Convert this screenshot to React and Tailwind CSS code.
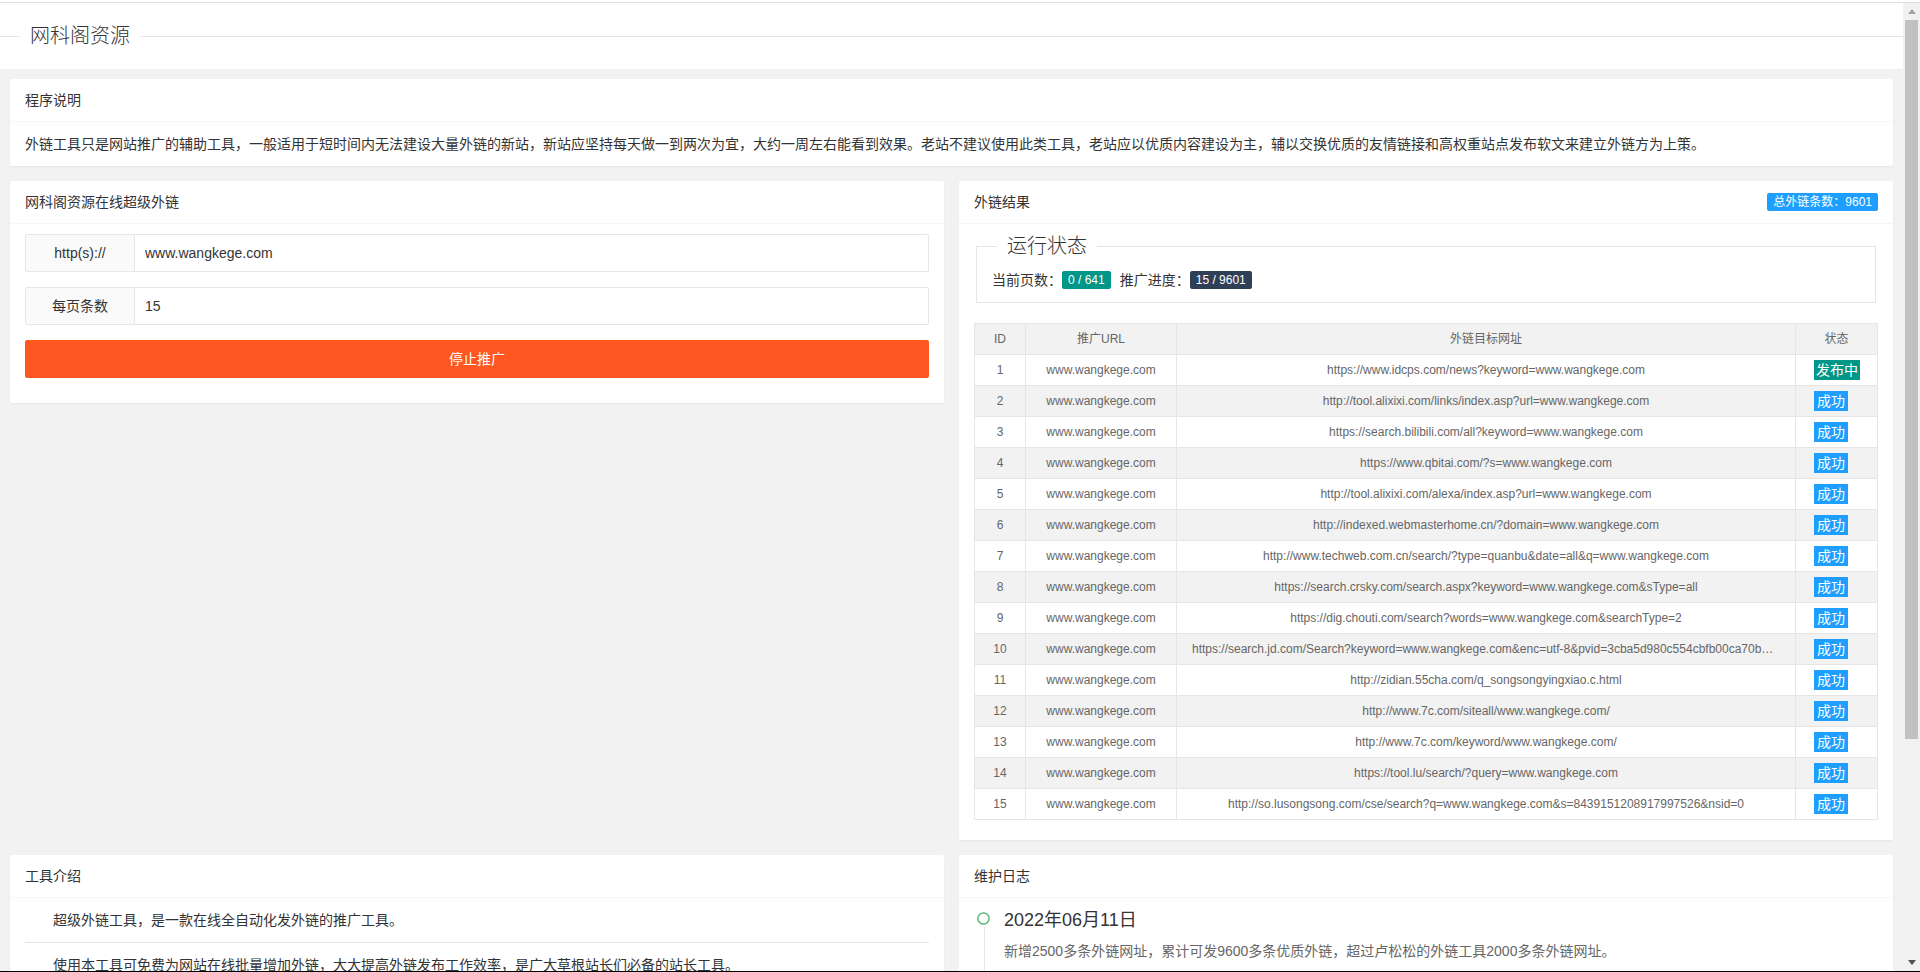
import React from 'react';

const rows = [
  ['https://www.idcps.com/news?keyword=www.wangkege.com', 'busy'],
  ['http://tool.alixixi.com/links/index.asp?url=www.wangkege.com', 'ok'],
  ['https://search.bilibili.com/all?keyword=www.wangkege.com', 'ok'],
  ['https://www.qbitai.com/?s=www.wangkege.com', 'ok'],
  ['http://tool.alixixi.com/alexa/index.asp?url=www.wangkege.com', 'ok'],
  ['http://indexed.webmasterhome.cn/?domain=www.wangkege.com', 'ok'],
  ['http://www.techweb.com.cn/search/?type=quanbu&date=all&q=www.wangkege.com', 'ok'],
  ['https://search.crsky.com/search.aspx?keyword=www.wangkege.com&sType=all', 'ok'],
  ['https://dig.chouti.com/search?words=www.wangkege.com&searchType=2', 'ok'],
  ['https://search.jd.com/Search?keyword=www.wangkege.com&enc=utf-8&pvid=3cba5d980c554cbfb00ca70b1e4f2a7c', 'ok'],
  ['http://zidian.55cha.com/q_songsongyingxiao.c.html', 'ok'],
  ['http://www.7c.com/siteall/www.wangkege.com/', 'ok'],
  ['http://www.7c.com/keyword/www.wangkege.com/', 'ok'],
  ['https://tool.lu/search/?query=www.wangkege.com', 'ok'],
  ['http://so.lusongsong.com/cse/search?q=www.wangkege.com&s=8439151208917997526&nsid=0', 'ok'],
];

function Card({ title, right, children, className = '' }) {
  return (
    <div className={`bg-white rounded-[2px] shadow-[0_1px_2px_0_rgba(0,0,0,0.05)] ${className}`}>
      <div className="h-[43px] leading-[42px] px-[15px] border-b border-[#f6f6f6] text-[14px] text-[#333] flex items-center justify-between">
        <span>{title}</span>
        {right}
      </div>
      {children}
    </div>
  );
}

function Field({ label, value }) {
  return (
    <div className="flex h-[38px]">
      <div className="w-[110px] shrink-0 bg-[#fafafa] border border-[#e6e6e6] rounded-l-[2px] text-center leading-[36px] text-[14px] text-[#333]">
        {label}
      </div>
      <div className="flex-1 border border-l-0 border-[#e6e6e6] rounded-r-[2px] pl-[10px] leading-[36px] text-[14px] text-[#333]">
        {value}
      </div>
    </div>
  );
}

function Scrollbar() {
  return (
    <div className="w-[17px] shrink-0 bg-[#f1f1f1] flex flex-col">
      <div className="h-[17px] flex items-center justify-center">
        <svg width="8" height="5" viewBox="0 0 8 5"><path d="M0 5 L4 0 L8 5 Z" fill="#a3a3a3" /></svg>
      </div>
      <div className="h-[719px] mx-[2px] bg-[#c1c1c1]"></div>
      <div className="flex-1"></div>
      <div className="h-[17px] flex items-center justify-center">
        <svg width="8" height="5" viewBox="0 0 8 5"><path d="M0 0 L8 0 L4 5 Z" fill="#505050" /></svg>
      </div>
    </div>
  );
}

export default function App() {
  return (
    <div className="h-[972px] flex flex-col overflow-hidden bg-white font-['Liberation_Sans','Noto_Sans_CJK_SC',sans-serif]">
      <div className="h-[2px] bg-white"></div>
      <div className="h-px bg-[#dedede]"></div>
      <div className="flex flex-1 min-h-0">
        <div className="flex-1 min-w-0 overflow-hidden bg-[#f2f2f2]">
          <div className="h-[66px] bg-white flex items-center">
            <div className="w-[20px] h-px bg-[#e6e6e6]"></div>
            <span className="px-[10px] text-[20px] font-light text-[#333] leading-[26px]">网科阁资源</span>
            <div className="flex-1 h-px bg-[#e6e6e6]"></div>
          </div>

          <div className="px-[10px] pt-[10px] flex flex-col gap-[15px]">
            <Card title="程序说明">
              <div className="px-[15px] py-[10px] leading-[24px] text-[14px] text-[#333]">
                外链工具只是网站推广的辅助工具，一般适用于短时间内无法建设大量外链的新站，新站应坚持每天做一到两次为宜，大约一周左右能看到效果。老站不建议使用此类工具，老站应以优质内容建设为主，辅以交换优质的友情链接和高权重站点发布软文来建立外链方为上策。
              </div>
            </Card>

            <div className="grid grid-cols-2 gap-[15px] items-start">
              <Card title="网科阁资源在线超级外链">
                <div className="px-[15px] pt-[10px] pb-[25px] flex flex-col gap-[15px]">
                  <Field label="http(s)://" value="www.wangkege.com" />
                  <Field label="每页条数" value="15" />
                  <button className="h-[38px] w-full bg-[#ff5722] text-white text-[14px] rounded-[2px]">停止推广</button>
                </div>
              </Card>

              <Card
                title="外链结果"
                right={<span className="h-[18px] leading-[18px] px-[6px] rounded-[2px] bg-[#1e9fff] text-white text-[12px]">总外链条数：9601</span>}
              >
                <div className="px-[15px] pt-[10px] pb-[20px]">
                  <fieldset className="mx-[2px] border border-[#e6e6e6]">
                    <legend className="ml-[20px] px-[10px] text-[20px] font-light leading-[24px] text-[#333]">运行状态</legend>
                    <div className="px-[15px] py-[10px] leading-[24px] text-[14px] text-[#333] flex items-center">
                      <span>当前页数：</span>
                      <span className="h-[18px] leading-[18px] px-[6px] rounded-[2px] bg-[#009688] text-white text-[12px] mr-[9px]">0 / 641</span>
                      <span>推广进度：</span>
                      <span className="h-[18px] leading-[18px] px-[6px] rounded-[2px] bg-[#2f4056] text-white text-[12px]">15 / 9601</span>
                    </div>
                  </fieldset>

                  <table className="mt-[20px] w-full table-fixed border-collapse text-[12px] text-[#666]">
                    <colgroup>
                      <col className="w-[51px]" />
                      <col className="w-[151px]" />
                      <col />
                      <col className="w-[82px]" />
                    </colgroup>
                    <thead>
                      <tr className="bg-[#f2f2f2]">
                        <th className="border border-[#e6e6e6] px-[15px] h-[31px] py-0 leading-[20px] font-normal text-center">ID</th>
                        <th className="border border-[#e6e6e6] px-[15px] h-[31px] py-0 leading-[20px] font-normal text-center">推广URL</th>
                        <th className="border border-[#e6e6e6] px-[15px] h-[31px] py-0 leading-[20px] font-normal text-center">外链目标网址</th>
                        <th className="border border-[#e6e6e6] px-[15px] h-[31px] py-0 leading-[20px] font-normal text-center">状态</th>
                      </tr>
                    </thead>
                    <tbody>
                      {rows.map(([url, st], i) => (
                        <tr key={i} className={i % 2 === 1 ? 'bg-[#f2f2f2]' : 'bg-white'}>
                          <td className="border border-[#e6e6e6] px-[10px] h-[31px] py-0 leading-[20px] text-center">{i + 1}</td>
                          <td className="border border-[#e6e6e6] px-[10px] h-[31px] py-0 leading-[20px] text-center whitespace-nowrap">www.wangkege.com</td>
                          <td className="border border-[#e6e6e6] px-[15px] h-[31px] py-0 leading-[20px] text-center truncate">{url}</td>
                          <td className="border border-[#e6e6e6] pl-[18px] pr-[5px] h-[31px] py-0 leading-[20px]">
                            {st === 'busy' ? (
                              <div className="w-fit h-[20px] leading-[20px] px-[2px] bg-[#009688] text-white text-[14px]">发布中</div>
                            ) : (
                              <div className="w-fit h-[20px] leading-[20px] px-[3px] bg-[#1e9fff] text-white text-[14px]">成功</div>
                            )}
                          </td>
                        </tr>
                      ))}
                    </tbody>
                  </table>
                </div>
              </Card>
            </div>

            <div className="grid grid-cols-2 gap-[15px] items-start">
              <Card title="工具介绍">
                <div className="px-[15px] text-[14px] text-[#333] leading-[24px]">
                  <p className="py-[10px] indent-[2em] border-b border-[#e6e6e6]">超级外链工具，是一款在线全自动化发外链的推广工具。</p>
                  <p className="py-[10px] indent-[2em]">使用本工具可免费为网站在线批量增加外链，大大提高外链发布工作效率，是广大草根站长们必备的站长工具。</p>
                </div>
              </Card>
              <Card title="维护日志">
                <div className="px-[15px] pt-[10px] pb-[10px] flex">
                  <div className="w-[20px] shrink-0 flex flex-col">
                    <svg className="mt-[4px] ml-[3px]" width="13" height="13" viewBox="0 0 13 13">
                      <circle cx="6.5" cy="6.5" r="5.6" fill="none" stroke="#5fb878" strokeWidth="1.5" />
                    </svg>
                    <div className="ml-[10px] mt-[2px] w-px flex-1 bg-[#e6e6e6]"></div>
                  </div>
                  <div className="pl-[10px] pb-[20px]">
                    <div className="text-[18px] leading-[24px] text-[#333]">2022年06月11日</div>
                    <div className="mt-[7px] text-[14px] leading-[24px] text-[#666]">新增2500多条外链网址，累计可发9600多条优质外链，超过卢松松的外链工具2000多条外链网址。</div>
                  </div>
                </div>
              </Card>
            </div>
          </div>
        </div>
        <Scrollbar />
      </div>
      <div className="h-px bg-black"></div>
    </div>
  );
}
